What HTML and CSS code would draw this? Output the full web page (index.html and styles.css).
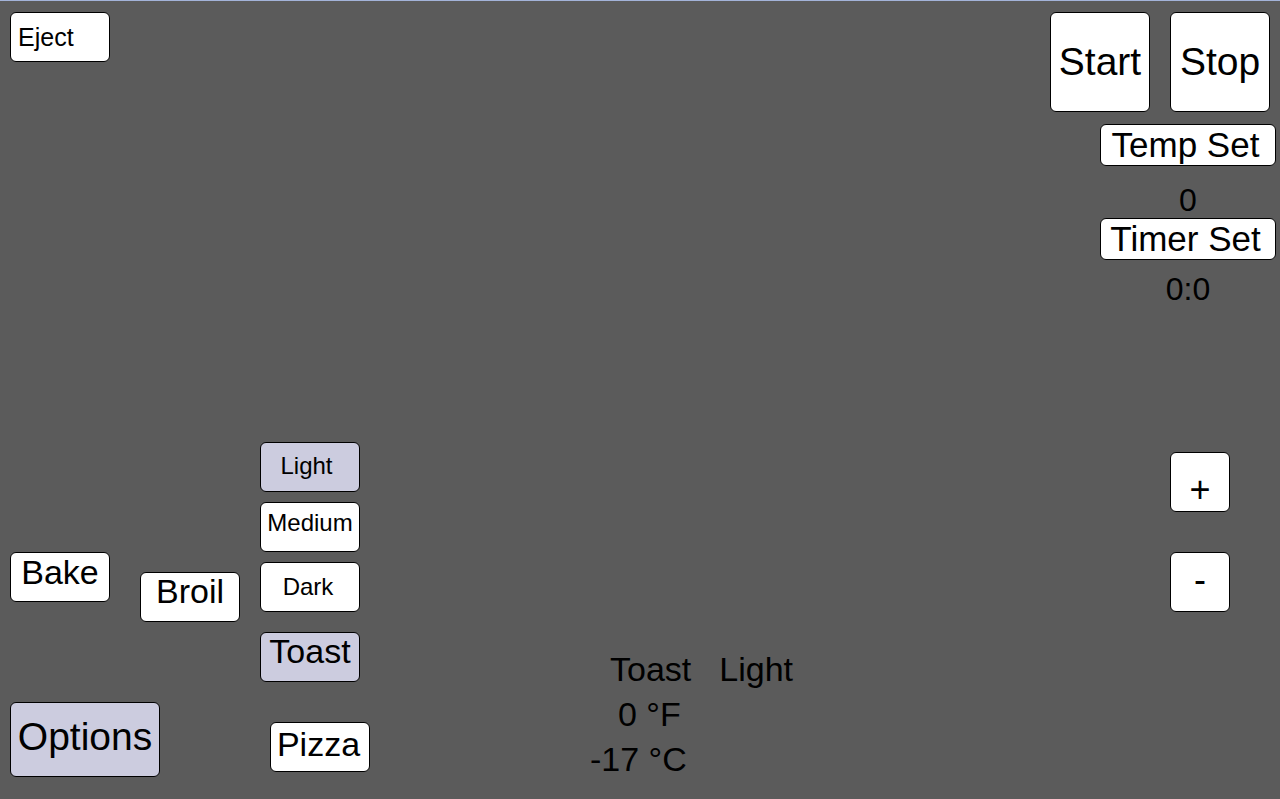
FILE: index.html
```html
<!DOCTYPE html>
<html lang="en">
<head>
<meta charset="utf-8">
<title>Toaster Oven</title>
<link rel="stylesheet" href="styles.css">
</head>
<body>
<div class="page">
  <section class="top">
    <button class="btn eject">Eject</button>
    <div class="ctrl">
      <div class="run">
        <button class="btn big">Start</button>
        <button class="btn big">Stop</button>
      </div>
      <button class="btn setting">Temp Set</button>
      <div class="readout">0</div>
      <button class="btn setting">Timer Set</button>
      <div class="readout readout-timer">0:0</div>
    </div>
  </section>

  <section class="bottom">
    <div class="cluster">
      <div class="row-modes">
        <button class="btn mode bake">Bake</button>
        <button class="btn mode broil">Broil</button>
        <div class="shades">
          <button class="btn shade selected light">Light</button>
          <button class="btn shade medium">Medium</button>
          <button class="btn shade dark">Dark</button>
          <button class="btn mode selected toast">Toast</button>
        </div>
      </div>
      <div class="row-extra">
        <button class="btn options selected">Options</button>
        <button class="btn mode pizza">Pizza</button>
      </div>
    </div>

    <div class="status">
      <div class="status-line line-mode">Toast<span class="shade-name">Light</span></div>
      <div class="status-line line-f">0 °F</div>
      <div class="status-line">-17 °C</div>
    </div>

    <div class="adjust">
      <button class="btn step plus">+</button>
      <button class="btn step minus">-</button>
    </div>
  </section>
</div>
</body>
</html>
```

FILE: styles.css
```css
html, body {
  margin: 0;
  padding: 0;
}

body {
  background: #5b5b5b;
  font-family: "Liberation Sans", Arial, sans-serif;
  color: #000;
}

.page {
  box-sizing: border-box;
  width: 1280px;
  height: 799px;
  border-top: 1px solid #a3b3d9;
  display: flex;
  flex-direction: column;
}

.btn {
  box-sizing: border-box;
  margin: 0;
  padding: 0;
  border: 1px solid #000;
  border-radius: 6px;
  background: #fff;
  color: #000;
  font-family: inherit;
  display: flex;
  align-items: center;
  justify-content: center;
  white-space: nowrap;
  cursor: pointer;
}

.btn.selected {
  background: #ccccdf;
}

/* top area */
.top {
  display: flex;
  justify-content: space-between;
  align-items: flex-start;
  padding: 11px 4px 0 10px;
}

.eject {
  width: 100px;
  height: 50px;
  font-size: 25px;
  justify-content: flex-start;
  padding-left: 7px;
}

.ctrl {
  display: flex;
  flex-direction: column;
  align-items: flex-end;
  width: 226px;
}

.run {
  display: flex;
  gap: 20px;
  margin-right: 6px;
}

.big {
  width: 100px;
  height: 100px;
  font-size: 39px;
}

.setting {
  width: 176px;
  height: 42px;
  margin-top: 12px;
  font-size: 35px;
  padding-right: 5px;
}

.readout {
  width: 176px;
  margin-top: 16px;
  text-align: center;
  font-size: 32px;
  line-height: 36px;
}

.ctrl .readout + .setting {
  margin-top: 0;
}

.readout-timer {
  margin-top: 11px;
}

/* bottom area */
.bottom {
  margin-top: auto;
  display: flex;
  align-items: flex-start;
  padding: 0 50px 22px 10px;
}

.cluster {
  display: flex;
  flex-direction: column;
}

.row-modes {
  display: flex;
  align-items: flex-start;
}

.mode {
  width: 100px;
  height: 50px;
  font-size: 34px;
}

.bake {
  margin-top: 110px;
  padding-bottom: 10px;
}

.broil {
  margin-top: 130px;
  margin-left: 30px;
  padding-bottom: 12px;
}

.shades {
  display: flex;
  flex-direction: column;
  gap: 10px;
  margin-left: 20px;
}

.shade {
  width: 100px;
  height: 50px;
  font-size: 24px;
}

.light {
  padding-bottom: 3px;
  padding-right: 7px;
}

.medium {
  padding-bottom: 9px;
}

.dark {
  padding-right: 4px;
}

.toast {
  margin-top: 10px;
  padding-bottom: 11px;
}

.row-extra {
  display: flex;
  align-items: flex-start;
  margin-top: 20px;
}

.options {
  width: 150px;
  height: 75px;
  font-size: 39px;
  padding-bottom: 5px;
}

.pizza {
  margin-left: 110px;
  margin-top: 20px;
  padding-bottom: 5px;
  padding-right: 3px;
}

.status {
  margin-left: 220px;
  margin-top: 205px;
  margin-bottom: -5px;
}

.status-line {
  font-size: 34px;
  line-height: 45px;
  white-space: pre;
}

.line-mode {
  padding-left: 20px;
}

.shade-name {
  margin-left: 28px;
}

.line-f {
  padding-left: 28px;
}

.adjust {
  margin-left: auto;
  margin-top: 10px;
  display: flex;
  flex-direction: column;
  gap: 40px;
}

.step {
  width: 60px;
  height: 60px;
  font-size: 36px;
}

.plus {
  padding-top: 15px;
}

.minus {
  padding-bottom: 5px;
}
```
